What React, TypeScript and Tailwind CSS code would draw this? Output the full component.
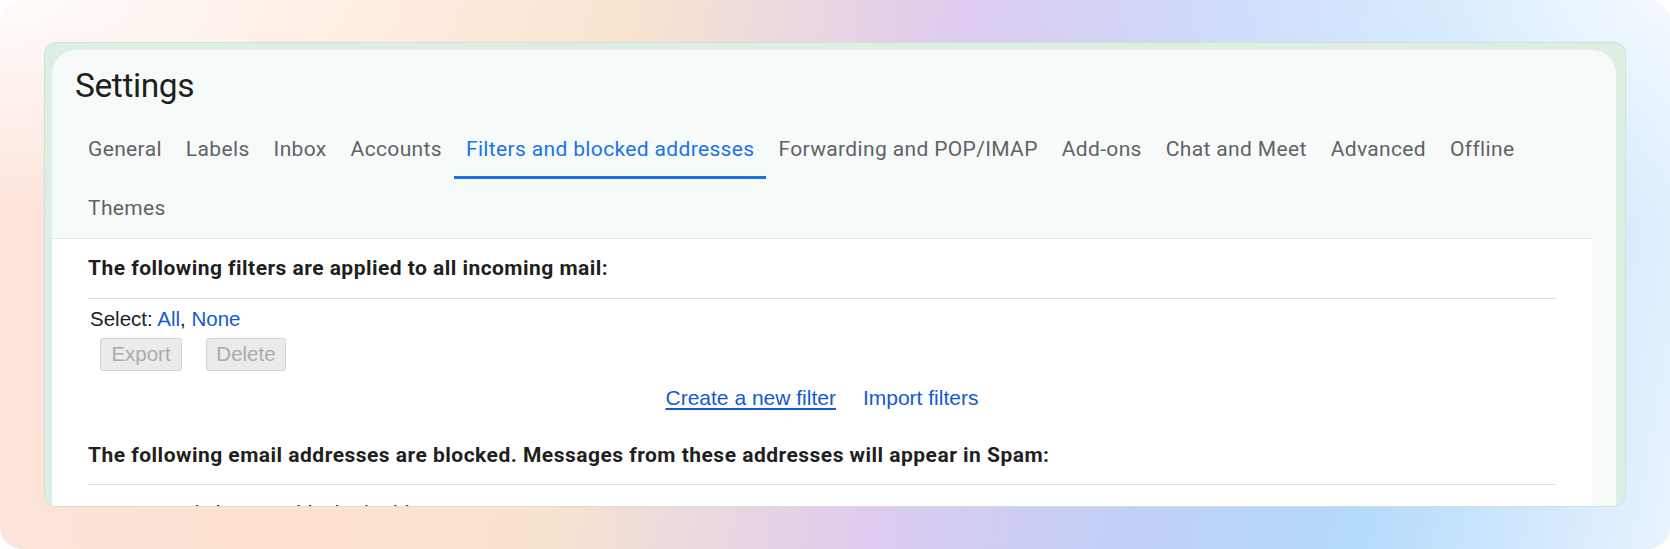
const tabs = [
  'General',
  'Labels',
  'Inbox',
  'Accounts',
  'Filters and blocked addresses',
  'Forwarding and POP/IMAP',
  'Add-ons',
  'Chat and Meet',
  'Advanced',
  'Offline',
  'Themes',
];

const ACTIVE = 'Filters and blocked addresses';

function Tab({ label }: { label: string }) {
  const active = label === ACTIVE;
  return (
    <div
      className={
        'relative h-[59px] px-[12px] flex items-center text-[21px] tracking-[0.35px] whitespace-nowrap ' +
        (active ? 'text-[#1a73e8]' : 'text-[#5f6368]')
      }
    >
      {label}
      {active && <div className="absolute left-0 right-0 bottom-0 h-[3px] bg-[#1a73e8]" />}
    </div>
  );
}

export default function App() {
  return (
    <div className="w-[1670px] h-[549px] bg-white">
      <div className="w-full h-full rounded-[22px] overflow-hidden pt-[42px] pl-[44px] bg-[radial-gradient(ellipse_at_top_left,rgba(255,255,255,0.85),rgba(255,255,255,0)_28%),radial-gradient(ellipse_at_top_right,rgba(255,255,255,0.7),rgba(255,255,255,0)_30%),linear-gradient(100deg,#fde4dd_0%,#fde2cf_22%,#f8e3cf_36%,#dccbef_55%,#bfcff8_70%,#b3dafb_82%,#e9f3fe_100%)]">
        <div className="w-[1582px] h-[465px] rounded-[12px] border border-black/5 bg-[#dcefe2] pt-[7px] pl-[7px] pr-[9px] overflow-hidden">
          <div className="h-full rounded-t-[24px] bg-[#f6faf9] flex flex-col font-['Roboto',sans-serif]">
            {/* title */}
            <div className="shrink-0 h-[70px] pt-[16px] pl-[23px] text-[33.5px] tracking-[-0.4px] leading-[40px] text-[#1f1f1f]">
              Settings
            </div>

            {/* tabs */}
            <div className="shrink-0 flex flex-wrap pl-[24px] pr-[48px]">
              {tabs.map(t => (
                <Tab key={t} label={t} />
              ))}
            </div>

            {/* content */}
            <div className="flex-1 min-h-0 overflow-hidden mr-[24px] bg-white border-t border-[#e3e7e8] px-[36px]">
              <div className="pt-[17px] pb-[18px] border-b border-[#dedede] text-[21px] tracking-[0.46px] leading-[24px] font-bold text-[#1f1f1f]">
                The following filters are applied to all incoming mail:
              </div>

              <div className="font-['Liberation_Sans',Arial,sans-serif]">
                <div className="mt-[8px] ml-[2px] text-[20.5px] leading-[24px] text-[#222]">
                  Select: <span className="text-[#1558d6]">All</span>,{' '}
                  <span className="text-[#1558d6]">None</span>
                </div>

                <div className="mt-[7px] ml-[12px] flex gap-[24px]">
                  <button className="w-[82px] h-[33px] rounded-[3px] border border-[#d3d3d3] bg-[#ebebeb] text-[20.5px] text-[#ababab]">
                    Export
                  </button>
                  <button className="w-[80px] h-[33px] rounded-[3px] border border-[#d3d3d3] bg-[#ebebeb] text-[20.5px] text-[#ababab]">
                    Delete
                  </button>
                </div>

                <div className="mt-[15px] flex justify-center gap-[27px] text-[21px] leading-[24px] text-[#1558d6]">
                  <span className="underline underline-offset-[3px]">Create a new filter</span>
                  <span>Import filters</span>
                </div>
              </div>

              <div className="mt-[33px] pb-[17px] border-b border-[#dedede] text-[21px] tracking-[0.48px] leading-[24px] font-bold text-[#1f1f1f]">
                The following email addresses are blocked. Messages from these addresses will appear in Spam:
              </div>

              <div className="mt-[16px] font-['Liberation_Sans',Arial,sans-serif] text-[21px] leading-[24px] text-[#222]">
                You currently have no blocked addresses.
              </div>
            </div>
          </div>
        </div>
      </div>
    </div>
  );
}
